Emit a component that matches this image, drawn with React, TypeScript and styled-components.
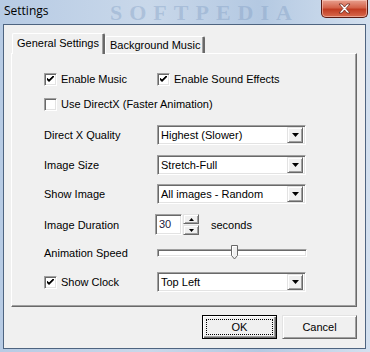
import React, { useState } from "react";
import styled, { createGlobalStyle } from "styled-components";

const GlobalStyle = createGlobalStyle`
  html, body {
    margin: 0;
    padding: 0;
    background: #a9c0dc;
  }
  * {
    box-sizing: border-box;
  }
`;

const Window = styled.div`
  width: 370px;
  height: 352px;
  display: flex;
  flex-direction: column;
  position: relative;
  overflow: hidden;
  background: linear-gradient(90deg, #b7cbe4 0%, #c9d8ea 40%, #b4c9e2 70%, #d3e0ef 100%);
  font-family: "Liberation Sans", Arial, sans-serif;
  font-size: 11px;
  color: #000;
`;

const Watermark = styled.div`
  position: absolute;
  left: 110px;
  top: 1px;
  line-height: 24px;
  font-family: "Liberation Serif", serif;
  font-weight: 700;
  font-size: 22px;
  letter-spacing: 7px;
  color: rgba(120, 150, 190, 0.35);
  pointer-events: none;
`;

const TitleBar = styled.div`
  height: 24px;
  display: flex;
  align-items: flex-start;
  justify-content: space-between;
  position: relative;
`;

const Title = styled.div`
  font-family: "Open Sans", "Liberation Sans", sans-serif;
  font-size: 12px;
  margin: 2px 0 0 4px;
  color: #000;
`;

const CloseButton = styled.div`
  width: 47px;
  height: 18px;
  margin-right: 2px;
  border: 1px solid #5a1a12;
  border-top: none;
  border-radius: 0 0 5px 5px;
  background: linear-gradient(180deg, #e8a08f 0%, #d4634a 45%, #c13c22 55%, #d86a4e 100%);
  display: flex;
  align-items: center;
  justify-content: center;
  box-shadow: inset 0 0 0 1px rgba(255, 220, 210, 0.5);
`;

const Client = styled.div`
  flex: 1;
  margin: 0 4px 3px 3px;
  background: #f0f0f0;
  border: 1px solid #4e6480;
  position: relative;
  display: flex;
  flex-direction: column;
  padding: 8px 9px 0 7px;
`;

const TabStrip = styled.div`
  display: flex;
  align-items: flex-end;
  height: 20px;
  padding-left: 1px;
  position: relative;
  z-index: 2;
`;

const Tab = styled.div<{ active?: boolean }>`
  height: ${(p) => (p.active ? "21px" : "17px")};
  margin-bottom: ${(p) => (p.active ? "-1px" : "0")};
  padding: ${(p) => (p.active ? "3px 4px 0 4px" : "2px 3px 0 4px")};
  background: #f0f0f0;
  border-top: 1px solid #fff;
  border-left: 1px solid #fff;
  border-right: 2px solid #696969;
  box-shadow: inset -1px 0 0 #a0a0a0;
  border-radius: 2px 2px 0 0;
  white-space: nowrap;
`;

const Panel = styled.div`
  width: 346px;
  height: 254px;
  background: #f0f0f0;
  border-top: 1px solid #fff;
  border-left: 1px solid #fff;
  border-right: 1px solid #696969;
  border-bottom: 1px solid #696969;
  box-shadow: inset -1px -1px 0 #a0a0a0;
  padding: 15px 0 0 32px;
  display: flex;
  flex-direction: column;
`;

const Row = styled.div<{ gap: number }>`
  height: 20px;
  margin-top: ${(p) => p.gap}px;
  display: grid;
  grid-template-columns: 113px 1fr;
  align-items: center;
`;

const Label = styled.div`
  white-space: nowrap;
`;

const Check = styled.label`
  display: flex;
  align-items: center;
  gap: 4px;
  white-space: nowrap;
`;

const Box = styled.span`
  flex-shrink: 0;
  width: 13px;
  height: 13px;
  background: #fff;
  border-top: 1px solid #a0a0a0;
  border-left: 1px solid #a0a0a0;
  border-right: 1px solid #fff;
  border-bottom: 1px solid #fff;
  box-shadow: inset 1px 1px 0 #696969, inset -1px -1px 0 #e3e3e3;
  display: flex;
  align-items: center;
  justify-content: center;
`;

const Sunken = styled.div`
  border-top: 1px solid #a0a0a0;
  border-left: 1px solid #a0a0a0;
  border-right: 1px solid #fff;
  border-bottom: 1px solid #fff;
  box-shadow: inset 1px 1px 0 #696969, inset -1px -1px 0 #e3e3e3;
  background: #fff;
`;

const Select = styled(Sunken)`
  width: 149px;
  height: 20px;
  display: flex;
  align-items: center;
  padding: 2px 2px 2px 3px;
  justify-content: space-between;
`;

const Raised = styled.div`
  background: #f0f0f0;
  border-top: 1px solid #e3e3e3;
  border-left: 1px solid #e3e3e3;
  border-right: 1px solid #696969;
  border-bottom: 1px solid #696969;
  box-shadow: inset 1px 1px 0 #fff, inset -1px -1px 0 #a0a0a0;
  display: flex;
  align-items: center;
  justify-content: center;
`;

const DropButton = styled(Raised)`
  width: 16px;
  height: 16px;
`;

const Spin = styled.div`
  display: flex;
  align-items: center;
  margin-left: -2px;
`;

const SpinInput = styled(Sunken)`
  width: 27px;
  height: 21px;
  padding: 3px 0 0 3px;
  color: #202040;
`;

const SpinButtons = styled.div`
  display: flex;
  flex-direction: column;
  margin-left: 1px;
  gap: 1px;
`;

const SpinButton = styled(Raised)`
  width: 16px;
  height: 10px;
`;

const Seconds = styled.span`
  margin-left: 12px;
`;

const Slider = styled.div`
  position: relative;
  width: 150px;
  height: 20px;
  display: flex;
  align-items: center;
`;

const Track = styled(Sunken)`
  width: 150px;
  height: 8px;
`;

const Thumb = styled.svg`
  position: absolute;
  top: 2px;
`;

const Footer = styled.div`
  display: flex;
  justify-content: flex-end;
  gap: 5px;
  padding: 8px 0 0 0;
  width: 346px;
`;

const Button = styled(Raised)<{ primary?: boolean }>`
  width: 75px;
  height: 24px;
  position: relative;
  ${(p) =>
    p.primary
      ? `border: 1px solid #000; box-shadow: inset 1px 1px 0 #fff, inset -1px -1px 0 #696969, inset -2px -2px 0 #a0a0a0;`
      : ""}
`;

const Focus = styled.span`
  position: absolute;
  inset: 3px;
  border: 1px dotted #000;
`;

const Triangle = () => (
  <svg width="7" height="4" viewBox="0 0 7 4">
    <path d="M0 0h7L3.5 4z" fill="#000" />
  </svg>
);

const CheckBox: React.FC<{ checked: boolean; onClick: () => void; label: string }> = ({
  checked,
  onClick,
  label,
}) => (
  <Check onClick={onClick}>
    <Box>
      {checked && (
        <svg width="7" height="7" viewBox="0 0 7 7">
          <path d="M0 2l2 2 5-5v2l-5 5-2-2z" fill="#000" />
          <path d="M0 2.5l2 2 5-5" stroke="#000" strokeWidth="1.2" fill="none" />
        </svg>
      )}
    </Box>
    {label}
  </Check>
);

const Combo: React.FC<{ value: string }> = ({ value }) => (
  <Select>
    <span>{value}</span>
    <DropButton>
      <Triangle />
    </DropButton>
  </Select>
);

export default function App() {
  const [music, setMusic] = useState(true);
  const [sound, setSound] = useState(true);
  const [directx, setDirectx] = useState(false);
  const [clock, setClock] = useState(true);
  const [tab, setTab] = useState(0);
  const speed = 0.5;

  return (
    <>
      <GlobalStyle />
      <Window>
        <Watermark>SOFTPEDIA</Watermark>
        <TitleBar>
          <Title>Settings</Title>
          <CloseButton>
            <svg width="13" height="11" viewBox="0 0 13 11">
              <path
                d="M1 1h3l2.5 3 2.5-3h3L8 5.5 12 10H9L6.5 7 4 10H1l4-4.5z"
                fill="#fff"
                stroke="#6b2a20"
                strokeWidth="0.8"
              />
            </svg>
          </CloseButton>
        </TitleBar>
        <Client>
          <TabStrip>
            <Tab active={tab === 0} onClick={() => setTab(0)}>
              General Settings
            </Tab>
            <Tab active={tab === 1} onClick={() => setTab(1)}>
              Background Music
            </Tab>
          </TabStrip>
          <Panel>
            <Row gap={0}>
              <CheckBox checked={music} onClick={() => setMusic(!music)} label="Enable Music" />
              <CheckBox checked={sound} onClick={() => setSound(!sound)} label="Enable Sound Effects" />
            </Row>
            <Row gap={5}>
              <CheckBox
                checked={directx}
                onClick={() => setDirectx(!directx)}
                label="Use DirectX (Faster Animation)"
              />
            </Row>
            <Row gap={11}>
              <Label>Direct X Quality</Label>
              <Combo value="Highest (Slower)" />
            </Row>
            <Row gap={10}>
              <Label>Image Size</Label>
              <Combo value="Stretch-Full" />
            </Row>
            <Row gap={9}>
              <Label>Show Image</Label>
              <Combo value="All images - Random" />
            </Row>
            <Row gap={10}>
              <Label>Image Duration</Label>
              <Spin>
                <SpinInput>30</SpinInput>
                <SpinButtons>
                  <SpinButton>
                    <svg width="5" height="3" viewBox="0 0 5 3">
                      <path d="M0 3h5L2.5 0z" fill="#000" />
                    </svg>
                  </SpinButton>
                  <SpinButton>
                    <svg width="5" height="3" viewBox="0 0 5 3">
                      <path d="M0 0h5L2.5 3z" fill="#000" />
                    </svg>
                  </SpinButton>
                </SpinButtons>
                <Seconds>seconds</Seconds>
              </Spin>
            </Row>
            <Row gap={9}>
              <Label>Animation Speed</Label>
              <Slider>
                <Track />
                <Thumb
                  width="7"
                  height="15"
                  viewBox="0 0 7 15"
                  style={{ left: `${speed * 150 - 1}px` }}
                >
                  <path d="M0.5 0.5h6v10l-3 3.5-3-3.5z" fill="#f0f0f0" stroke="#696969" />
                  <path d="M1.5 1.5h4" stroke="#fff" />
                  <path d="M1.5 1.5v8.5" stroke="#fff" />
                </Thumb>
              </Slider>
            </Row>
            <Row gap={9}>
              <CheckBox checked={clock} onClick={() => setClock(!clock)} label="Show Clock" />
              <Combo value="Top Left" />
            </Row>
          </Panel>
          <Footer>
            <Button primary>
              <Focus />
              OK
            </Button>
            <Button>Cancel</Button>
          </Footer>
        </Client>
      </Window>
    </>
  );
}
